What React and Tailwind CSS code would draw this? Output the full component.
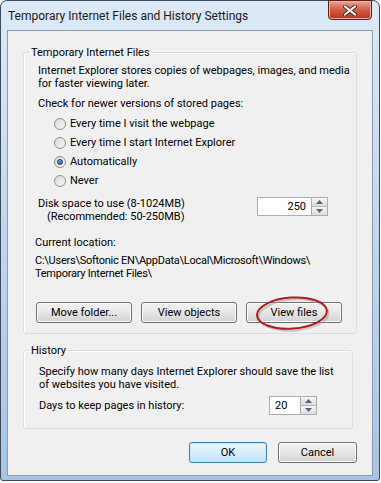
function Radio({ checked, label }) {
  return (
    <div className="flex h-[19px] items-center pl-[16px]">
      <span className="relative flex h-[12px] w-[12px] items-center justify-center rounded-full border border-[#8e8f8f] bg-gradient-to-br from-[#d8d8d8] to-[#f8f8f8]">
        {checked && (
          <span className="h-[6px] w-[6px] rounded-full border border-[#1a3d6b] bg-gradient-to-br from-[#7cc6ee] to-[#0f5da4]" />
        )}
      </span>
      <span className="ml-[4px]">{label}</span>
    </div>
  );
}

function Arrow({ up }) {
  return (
    <svg width="7" height="4" viewBox="0 0 7 4">
      <path d={up ? "M0 4 L3.5 0 L7 4 Z" : "M0 0 L3.5 4 L7 0 Z"} fill="#4c6486" />
    </svg>
  );
}

function Spin({ value, inputClass }) {
  return (
    <div className="flex h-[19px]">
      <div className={`flex items-center border border-[#abadb3] border-r-0 bg-white ${inputClass}`}>
        {value}
      </div>
      <div className="flex w-[17px] flex-col border border-[#abadb3]">
        <div className="flex flex-1 items-center justify-center border-b border-[#b6b6b6] bg-gradient-to-b from-[#f6f6f6] to-[#dcdcdc]">
          <Arrow up />
        </div>
        <div className="flex flex-1 items-center justify-center bg-gradient-to-b from-[#f6f6f6] to-[#dcdcdc]">
          <Arrow />
        </div>
      </div>
    </div>
  );
}

function Button({ children, primary, className = "" }) {
  return (
    <div
      className={`flex h-[21px] items-center justify-center rounded-[3px] border ${
        primary
          ? "border-[#3c7fb1] bg-gradient-to-b from-[#ecf7fd] via-[#d8eefb] to-[#bfe3f7] shadow-[inset_0_0_0_1px_#c2e6f8]"
          : "border-[#707070] bg-gradient-to-b from-[#f2f2f2] via-[#e6e6e6] to-[#d2d2d2] shadow-[inset_0_0_0_1px_#fcfcfc]"
      } ${className}`}
    >
      {children}
    </div>
  );
}

function Line({ children, className = "" }) {
  return <div className={`h-[13px] whitespace-nowrap ${className}`}>{children}</div>;
}

export default function App() {
  return (
    <div className="h-[483px] w-[381px] bg-white font-['Roboto',sans-serif] text-[11px] leading-[13px] text-black">
      <div className="flex h-[481px] w-[380px] flex-col rounded-t-[7px] rounded-b-[3px] border border-[#3b4b5e] bg-gradient-to-b from-[#dde9f6] via-[#c0d6ee] to-[#a7c4e4] px-[6px] pb-[4px]">
        <div className="flex h-[29px] items-start justify-between">
          <div className="pl-[1px] pt-[7px] text-[12px] leading-[16px] text-[#1a1a1a]">
            Temporary Internet Files and History Settings
          </div>
          <div className="-mt-px mr-[1px] flex h-[20px] w-[44px] items-center justify-center rounded-b-[4px] border border-[#5e2016] bg-gradient-to-b from-[#e8a598] via-[#d25a44] to-[#b9321d] shadow-[inset_0_0_0_1px_#eeb0a2]">
            <svg width="14" height="11" viewBox="0 0 14 11">
              <path d="M2 1.5 L12 9.5 M12 1.5 L2 9.5" stroke="#4a2a28" strokeWidth="4" strokeLinecap="round" />
              <path d="M2 1.5 L12 9.5 M12 1.5 L2 9.5" stroke="#ffffff" strokeWidth="2.2" strokeLinecap="round" />
            </svg>
          </div>
        </div>

        <div className="flex h-[446px] flex-col border border-[#8c9cad] bg-[#f0f0f0]">
          <fieldset className="mx-[15px] mt-[15px] rounded-[3px] border border-[#d5dfe5] pb-[10px] shadow-[inset_1px_1px_0_#ffffff]">
            <legend className="ml-[6px] px-[1px] leading-[13px]">Temporary Internet Files</legend>
            <div className="pl-[14px]">
              <div className="mt-[5px]">
                <Line>Internet Explorer stores copies of webpages, images, and media</Line>
                <Line>for faster viewing later.</Line>
              </div>
              <Line className="mt-[7px]">Check for newer versions of stored pages:</Line>
              <div className="mt-[4px]">
                <Radio label="Every time I visit the webpage" />
                <Radio label="Every time I start Internet Explorer" />
                <Radio checked label="Automatically" />
                <Radio label="Never" />
              </div>
              <div className="mt-[7px] flex justify-between pr-[28px]">
                <div>
                  <Line>Disk space to use (8-1024MB)</Line>
                  <Line className="pl-[9px]">(Recommended: 50-250MB)</Line>
                </div>
                <Spin value="250" inputClass="w-[54px] justify-end pr-[5px]" />
              </div>
            </div>
            <div className="pl-[11px]">
              <Line className="mt-[13px]">Current location:</Line>
              <div className="mt-[5px] tracking-[-0.25px]">
                <Line>C:\Users\Softonic EN\AppData\Local\Microsoft\Windows\</Line>
                <Line>Temporary Internet Files\</Line>
              </div>
            </div>
            <div className="mt-[22px] flex gap-[9px] pl-[12px]">
              <Button className="w-[96px]">Move folder...</Button>
              <Button className="w-[96px]">View objects</Button>
              <div className="relative">
                <Button className="w-[96px]">View files</Button>
                <svg
                  className="pointer-events-none absolute left-[8px] top-[-7px]"
                  width="78"
                  height="38"
                  viewBox="0 0 78 38"
                >
                  <ellipse cx="39.5" cy="20" rx="35" ry="15.5" fill="none" stroke="#9a9a9a" strokeOpacity="0.5" strokeWidth="2" transform="rotate(-4 39 19)" />
                  <ellipse cx="38" cy="18" rx="35" ry="15.5" fill="none" stroke="#b01b1b" strokeWidth="2" transform="rotate(-4 39 19)" />
                </svg>
              </div>
            </div>
          </fieldset>

          <fieldset className="ml-[15px] mr-[19px] mt-[10px] rounded-[3px] border border-[#d5dfe5] pb-[13px] shadow-[inset_1px_1px_0_#ffffff]">
            <legend className="ml-[6px] px-[1px] leading-[13px]">History</legend>
            <div className="pl-[15px]">
              <div className="mt-[8px]">
                <Line>Specify how many days Internet Explorer should save the list</Line>
                <Line>of websites you have visited.</Line>
              </div>
              <div className="mt-[5px] flex h-[19px] items-center justify-between pr-[35px]">
                <div>Days to keep pages in history:</div>
                <Spin value="20" inputClass="w-[31px] pl-[5px]" />
              </div>
            </div>
          </fieldset>

          <div className="mr-[15px] mt-[13px] flex justify-end gap-[11px]">
            <Button primary className="w-[78px]">OK</Button>
            <Button className="w-[79px]">Cancel</Button>
          </div>
        </div>
      </div>
    </div>
  );
}
